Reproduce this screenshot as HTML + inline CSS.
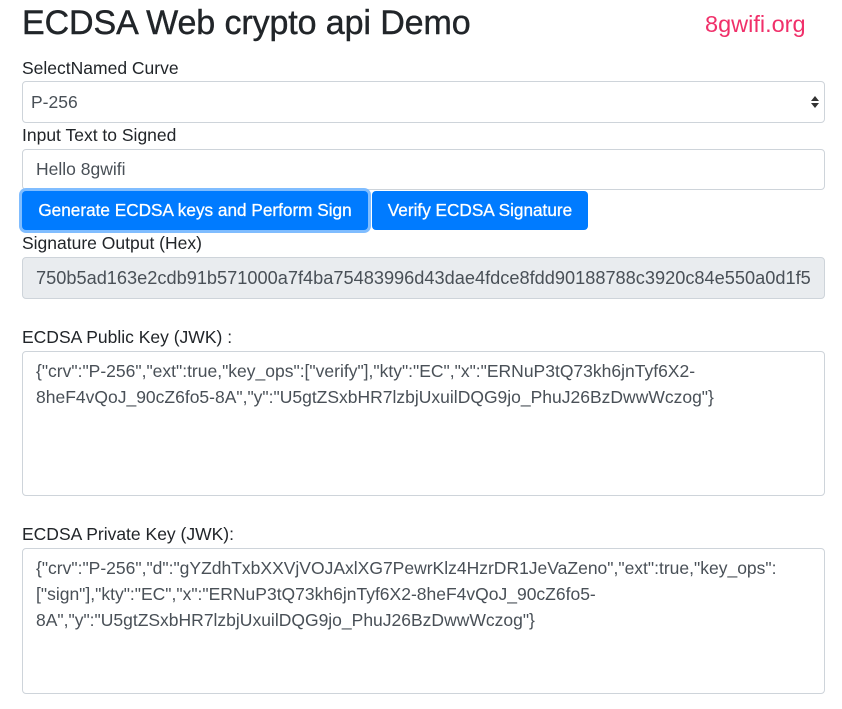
<!DOCTYPE html>
<html><head><meta charset="utf-8"><style>
body{margin:0;background:#fff;font-family:"Liberation Sans",Arial,sans-serif;color:#212529;width:842px;height:709px;overflow:hidden;position:relative}
.a{position:absolute}
h1{position:absolute;left:22px;top:4px;margin:0;font-size:34px;font-weight:400;letter-spacing:-0.1px;-webkit-text-stroke:0.4px #212529}
.org{left:705px;top:11px;font-size:23.5px;color:#f0306a}
.lbl{font-size:17.5px;left:22px}
.box{left:22px;width:803px;border:1px solid #ced4da;border-radius:4px;font-size:17.5px;color:#495057;box-sizing:border-box}
.btn{background:#007bff;color:#fff;font-size:17.2px;border-radius:4px;text-align:center;line-height:39px;height:39px;top:191px;-webkit-text-stroke:0.3px #fff;white-space:nowrap}
</style></head><body>
<h1>ECDSA Web crypto api Demo</h1>
<div class="a org">8gwifi.org</div>
<div class="a lbl" style="top:58px">SelectNamed Curve</div>
<div class="a box" style="top:81px;height:42px;padding:10px 8px;background:#fff">P-256
<svg class="a" style="right:4px;top:13px" width="10" height="14"><path d="M5 1L9 6H1Z M5 13L9 8H1Z" fill="#333"/></svg></div>
<div class="a lbl" style="top:125px">Input Text to Signed</div>
<div class="a box" style="top:149px;height:41px;padding:9px 13px">Hello 8gwifi</div>
<div class="a btn" style="left:22px;width:346px;box-shadow:0 0 0 3px #80bdff">Generate ECDSA keys and Perform Sign</div>
<div class="a btn" style="left:372px;width:216px">Verify ECDSA Signature</div>
<div class="a lbl" style="top:233px">Signature Output (Hex)</div>
<div class="a box" style="top:257px;height:42px;padding:10px 13px;background:#e9ecef;white-space:nowrap;overflow:hidden;font-size:18.2px">750b5ad163e2cdb91b571000a7f4ba75483996d43dae4fdce8fdd90188788c3920c84e550a0d1f5</div>
<div class="a lbl" style="top:327px">ECDSA Public Key (JWK) :</div>
<div class="a box" style="top:351px;height:145px;padding:6px 13px;line-height:26px;white-space:nowrap">{"crv":"P-256","ext":true,"key_ops":["verify"],"kty":"EC","x":"ERNuP3tQ73kh6jnTyf6X2-<br>8heF4vQoJ_90cZ6fo5-8A","y":"U5gtZSxbHR7lzbjUxuilDQG9jo_PhuJ26BzDwwWczog"}</div>
<div class="a lbl" style="top:524px">ECDSA Private Key (JWK):</div>
<div class="a box" style="top:548px;height:146px;padding:6px 13px;line-height:26px;white-space:nowrap">{"crv":"P-256","d":"gYZdhTxbXXVjVOJAxlXG7PewrKlz4HzrDR1JeVaZeno","ext":true,"key_ops":<br>["sign"],"kty":"EC","x":"ERNuP3tQ73kh6jnTyf6X2-8heF4vQoJ_90cZ6fo5-<br>8A","y":"U5gtZSxbHR7lzbjUxuilDQG9jo_PhuJ26BzDwwWczog"}</div>
</body></html>
